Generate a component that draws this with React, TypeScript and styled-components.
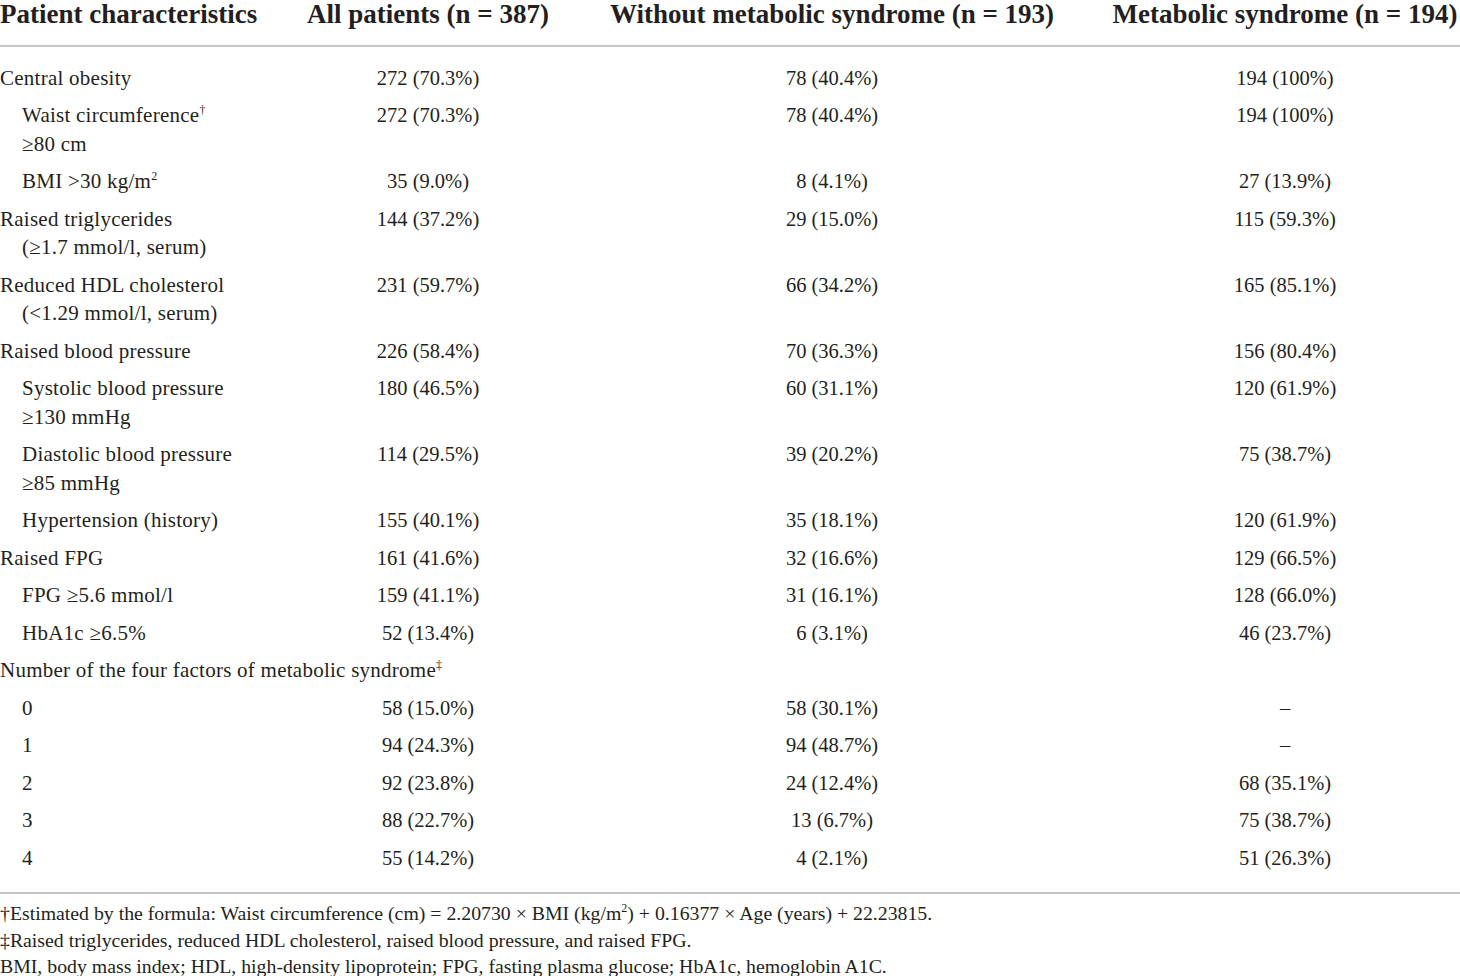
import React from 'react';
import styled, { createGlobalStyle } from 'styled-components';

const GlobalStyle = createGlobalStyle`
  html, body {
    margin: 0;
    padding: 0;
    background: #ffffff;
    overflow: hidden;
  }
  body {
    font-family: 'Liberation Serif', 'Times New Roman', serif;
    color: #231f20;
  }
`;

const Page = styled.div`
  width: 1460px;
  overflow: hidden;
`;

const Table = styled.table`
  width: 1476px;
  table-layout: fixed;
  border-collapse: collapse;
`;

const HeadCell = styled.th<{ $align?: 'left' | 'center' }>`
  font-size: 27px;
  font-weight: 700;
  line-height: 28px;
  white-space: nowrap;
  text-align: ${(p) => p.$align ?? 'center'};
  padding: 0 0 17px 0;
  border-bottom: 2px solid #c6c6c6;
`;

const Row = styled.tr<{ $first?: boolean; $last?: boolean }>`
  & > td {
    padding-top: ${(p) => (p.$first ? '16.5px' : '4.5px')};
    padding-bottom: ${(p) => (p.$last ? '20px' : '4.5px')};
  }
`;

const LabelCell = styled.td<{ $sub?: boolean }>`
  font-size: 21px;
  letter-spacing: 0.25px;
  line-height: 28.5px;
  white-space: nowrap;
  vertical-align: top;
  text-align: left;
  padding-left: ${(p) => (p.$sub ? '22px' : '0')};
`;

const ValueCell = styled.td`
  font-size: 20.5px;
  line-height: 28.5px;
  white-space: nowrap;
  vertical-align: top;
  text-align: center;
`;

const Wrap = styled.span<{ $indent?: boolean }>`
  display: block;
  padding-left: ${(p) => (p.$indent ? '22px' : '0')};
`;

const Sup = styled.sup`
  font-size: 12px;
  line-height: 0;
  vertical-align: 8px;
`;

const Notes = styled.div`
  border-top: 2px solid #c6c6c6;
  padding-top: 6px;
  font-size: 19.8px;
  line-height: 26.5px;
`;

const Note = styled.p`
  margin: 0;
  white-space: nowrap;
`;

type Entry = {
  label: React.ReactNode;
  more?: React.ReactNode;
  sub?: boolean;
  all?: string;
  without?: string;
  mets?: string;
  span?: boolean;
};

const rows: Entry[] = [
  { label: 'Central obesity', all: '272 (70.3%)', without: '78 (40.4%)', mets: '194 (100%)' },
  {
    label: (
      <>
        Waist circumference<Sup>†</Sup>
      </>
    ),
    more: '≥80 cm',
    sub: true,
    all: '272 (70.3%)',
    without: '78 (40.4%)',
    mets: '194 (100%)',
  },
  {
    label: (
      <>
        BMI &gt;30 kg/m<Sup>2</Sup>
      </>
    ),
    sub: true,
    all: '35 (9.0%)',
    without: '8 (4.1%)',
    mets: '27 (13.9%)',
  },
  {
    label: 'Raised triglycerides',
    more: '(≥1.7 mmol/l, serum)',
    all: '144 (37.2%)',
    without: '29 (15.0%)',
    mets: '115 (59.3%)',
  },
  {
    label: 'Reduced HDL cholesterol',
    more: '(<1.29 mmol/l, serum)',
    all: '231 (59.7%)',
    without: '66 (34.2%)',
    mets: '165 (85.1%)',
  },
  { label: 'Raised blood pressure', all: '226 (58.4%)', without: '70 (36.3%)', mets: '156 (80.4%)' },
  {
    label: 'Systolic blood pressure',
    more: '≥130 mmHg',
    sub: true,
    all: '180 (46.5%)',
    without: '60 (31.1%)',
    mets: '120 (61.9%)',
  },
  {
    label: 'Diastolic blood pressure',
    more: '≥85 mmHg',
    sub: true,
    all: '114 (29.5%)',
    without: '39 (20.2%)',
    mets: '75 (38.7%)',
  },
  { label: 'Hypertension (history)', sub: true, all: '155 (40.1%)', without: '35 (18.1%)', mets: '120 (61.9%)' },
  { label: 'Raised FPG', all: '161 (41.6%)', without: '32 (16.6%)', mets: '129 (66.5%)' },
  { label: 'FPG ≥5.6 mmol/l', sub: true, all: '159 (41.1%)', without: '31 (16.1%)', mets: '128 (66.0%)' },
  { label: 'HbA1c ≥6.5%', sub: true, all: '52 (13.4%)', without: '6 (3.1%)', mets: '46 (23.7%)' },
  {
    label: (
      <>
        Number of the four factors of metabolic syndrome<Sup>‡</Sup>
      </>
    ),
    span: true,
  },
  { label: '0', sub: true, all: '58 (15.0%)', without: '58 (30.1%)', mets: '–' },
  { label: '1', sub: true, all: '94 (24.3%)', without: '94 (48.7%)', mets: '–' },
  { label: '2', sub: true, all: '92 (23.8%)', without: '24 (12.4%)', mets: '68 (35.1%)' },
  { label: '3', sub: true, all: '88 (22.7%)', without: '13 (6.7%)', mets: '75 (38.7%)' },
  { label: '4', sub: true, all: '55 (14.2%)', without: '4 (2.1%)', mets: '51 (26.3%)' },
];

const App: React.FC = () => {
  return (
    <Page>
      <GlobalStyle />
      <Table>
        <colgroup>
          <col style={{ width: 286 }} />
          <col style={{ width: 284 }} />
          <col style={{ width: 524 }} />
          <col style={{ width: 382 }} />
        </colgroup>
        <thead>
          <tr>
            <HeadCell $align="left">Patient characteristics</HeadCell>
            <HeadCell>All patients (n = 387)</HeadCell>
            <HeadCell>Without metabolic syndrome (n = 193)</HeadCell>
            <HeadCell>Metabolic syndrome (n = 194)</HeadCell>
          </tr>
        </thead>
        <tbody>
          {rows.map((r, i) => (
            <Row key={i} $first={i === 0} $last={i === rows.length - 1}>
              {r.span ? (
                <LabelCell colSpan={4}>{r.label}</LabelCell>
              ) : (
                <>
                  <LabelCell $sub={r.sub}>
                    {r.label}
                    {r.more && <Wrap $indent={!r.sub}>{r.more}</Wrap>}
                  </LabelCell>
                  <ValueCell>{r.all}</ValueCell>
                  <ValueCell>{r.without}</ValueCell>
                  <ValueCell>{r.mets}</ValueCell>
                </>
              )}
            </Row>
          ))}
        </tbody>
      </Table>
      <Notes>
        <Note>
          †Estimated by the formula: Waist circumference (cm) = 2.20730 × BMI (kg/m<Sup>2</Sup>) + 0.16377 × Age
          (years) + 22.23815.
        </Note>
        <Note>‡Raised triglycerides, reduced HDL cholesterol, raised blood pressure, and raised FPG.</Note>
        <Note>BMI, body mass index; HDL, high-density lipoprotein; FPG, fasting plasma glucose; HbA1c, hemoglobin A1C.</Note>
      </Notes>
    </Page>
  );
};

export default App;
